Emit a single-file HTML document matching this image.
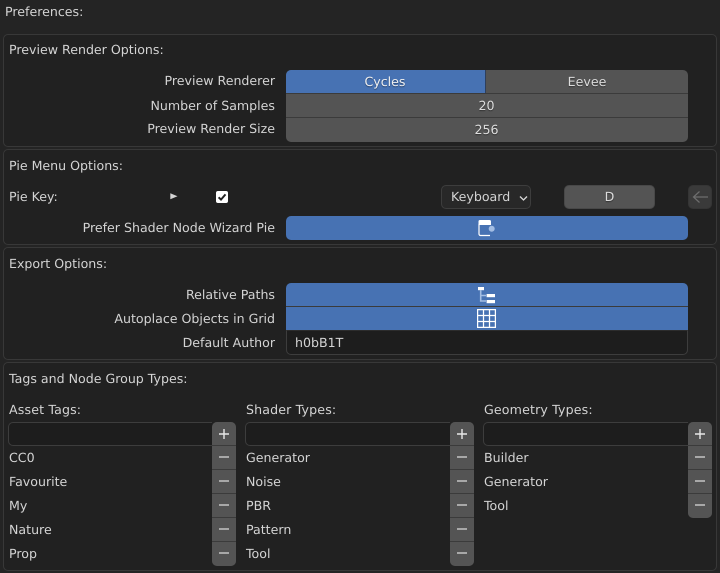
<!DOCTYPE html>
<html><head><meta charset="utf-8"><style>
html,body{margin:0;padding:0;background:#242424}
#r{position:relative;width:720px;height:573px;overflow:hidden;background:#242424;font-family:"DejaVu Sans",sans-serif;font-size:12.6px;color:#d4d4d4;text-rendering:geometricPrecision}
.t{position:absolute;white-space:nowrap;line-height:16px;height:16px}
.h{letter-spacing:.15px}
.tr{position:absolute;white-space:nowrap;line-height:16px;height:16px;right:445px;text-align:right}
.c{position:absolute;white-space:nowrap;line-height:16px;height:16px;text-align:center;color:#dcdcdc;text-shadow:0 1px 1px #0006}
.p{position:absolute;left:3px;width:712px;border:1px solid #383838;border-radius:5px;background:#212121}
.b{position:absolute;box-sizing:border-box}
.g{background:#545454}.bl{background:#4772b3}
.sm{position:absolute;width:24px;height:23px;background:#545454;left:0}
.ln{position:absolute;background:#3b3b3b}
</style></head><body><div id="r">
<div class="t" style="left:5px;top:4px">Preferences:</div>

<div class="p" style="top:34px;height:111px"></div>
<div class="t" style="left:9px;top:42px">Preview Render Options:</div>
<div class="tr" style="top:73px">Preview Renderer</div>
<div class="tr" style="top:98px">Number of Samples</div>
<div class="tr" style="top:121px">Preview Render Size</div>
<div class="b g" style="left:286px;top:70px;width:402px;height:72px;border-radius:5px;overflow:hidden">
<div class="b bl" style="left:0;top:0;width:199px;height:23px"></div>
<div class="b" style="left:199px;top:0;width:1px;height:23px;background:#2e3f5c"></div>
<div class="ln" style="left:0;top:23px;width:402px;height:1px"></div>
<div class="ln" style="left:0;top:47px;width:402px;height:1px"></div>
</div>
<div class="c" style="left:285px;width:200px;top:74px;color:#f0f0f0">Cycles</div>
<div class="c" style="left:486px;width:202px;top:74px">Eevee</div>
<div class="c" style="left:285px;width:403px;top:98px">20</div>
<div class="c" style="left:285px;width:403px;top:122px">256</div>

<div class="p" style="top:149px;height:94px"></div>
<div class="t" style="left:9px;top:158px">Pie Menu Options:</div>
<div class="t" style="left:9px;top:189px">Pie Key:</div>
<svg style="position:absolute;left:170px;top:192px" width="9" height="9"><path d="M0.3 1.3L7.5 4.3L0.3 7.3Z" fill="#d4d4d4"/></svg>
<svg style="position:absolute;left:216px;top:191px" width="12" height="12"><rect width="12" height="12" rx="2" fill="#fff"/><path d="M2.6 6.3L5 8.6L9.5 3.4" fill="none" stroke="#222" stroke-width="2"/></svg>
<div class="b" style="left:441px;top:185px;width:90px;height:24px;border:1px solid #3d3d3d;border-radius:5px;background:#282828"></div>
<div class="t" style="left:451px;top:189px">Keyboard</div>
<svg style="position:absolute;left:519px;top:195px" width="9" height="7"><path d="M1 1.5L4.5 5L8 1.5" fill="none" stroke="#d8d8d8" stroke-width="1.3"/></svg>
<div class="b g" style="left:564px;top:185px;width:91px;height:24px;border-radius:5px;border:1px solid #484848"></div>
<div class="c" style="left:564px;width:91px;top:189px">D</div>
<div class="b" style="left:688px;top:185px;width:24px;height:24px;border-radius:5px;background:#3a3a3a;border:1px solid #353535"></div>
<svg style="position:absolute;left:692px;top:190px" width="17" height="14"><path d="M16 7H1.5M7.5 1.5L1.5 7L7.5 12.5" fill="none" stroke="#6e6e6e" stroke-width="1.2"/></svg>
<div class="tr" style="top:220px">Prefer Shader Node Wizard Pie</div>
<div class="b bl" style="left:286px;top:216px;width:402px;height:24px;border-radius:5px"></div>
<svg style="position:absolute;left:477px;top:219px" width="19" height="18"><path d="M2 5V15A1.5 1.5 0 0 0 3.5 16.5H13" fill="none" stroke="#fff" stroke-width="1.2"/><path d="M1.5 6V2.5A1.5 1.5 0 0 1 3 1H12.5A1.5 1.5 0 0 1 14 2.5V6Z" fill="#fff"/><circle cx="14.7" cy="9.7" r="3" fill="#a3bde3"/></svg>

<div class="p" style="top:247px;height:111px"></div>
<div class="t" style="left:9px;top:256px">Export Options:</div>
<div class="tr" style="top:287px">Relative Paths</div>
<div class="tr" style="top:311px">Autoplace Objects in Grid</div>
<div class="tr" style="top:335px">Default Author</div>
<div class="b bl" style="left:286px;top:283px;width:402px;height:47px;border-radius:5px 5px 0 0"></div>
<div class="ln" style="left:286px;top:306px;width:402px;height:1px"></div>
<div class="b" style="left:286px;top:330px;width:402px;height:25px;background:#1d1d1d;border:1px solid #3d3d3d;border-top:1px solid #2c2c2c;border-radius:0 0 5px 5px"></div>
<div class="t" style="left:295px;top:335px">h0bB1T</div>
<svg style="position:absolute;left:477px;top:286px" width="20" height="19"><rect x="1" y="1" width="6" height="3.2" fill="#fff"/><path d="M3.7 4V15H9M3.7 9.5H9" fill="none" stroke="#a3bde3" stroke-width="1.6"/><rect x="9.6" y="8" width="8.4" height="3.2" fill="#fff"/><rect x="9.6" y="14" width="8.4" height="3.2" fill="#fff"/></svg>
<svg style="position:absolute;left:477px;top:309px" width="20" height="20"><path d="M.6.6H18.4V18.4H.6ZM6.5.6V18.4M12.5.6V18.4M.6 6.5H18.4M.6 12.5H18.4" fill="none" stroke="#fff" stroke-width="1.25"/></svg>

<div class="p" style="top:362px;height:207px"></div>
<div class="t" style="left:9px;top:371px">Tags and Node Group Types:</div>
<div class="t h" style="left:9px;top:402px">Asset Tags:</div>
<div class="t h" style="left:246px;top:402px">Shader Types:</div>
<div class="t h" style="left:484px;top:402px">Geometry Types:</div>

<div class="b" style="left:8px;top:422px;width:204px;height:24px;background:#1d1d1d;border:1px solid #3d3d3d;border-right:0;border-radius:5px 0 0 5px"></div>
<div class="b" style="left:245px;top:422px;width:205px;height:24px;background:#1d1d1d;border:1px solid #3d3d3d;border-right:0;border-radius:5px 0 0 5px"></div>
<div class="b" style="left:483px;top:422px;width:205px;height:24px;background:#1d1d1d;border:1px solid #3d3d3d;border-right:0;border-radius:5px 0 0 5px"></div>

<div class="b" style="left:212px;top:422px;width:24px;height:144px;background:#3b3b3b;border-radius:5px;overflow:hidden">
<div class="sm" style="top:0"></div><div class="sm" style="top:24px"></div><div class="sm" style="top:48px"></div><div class="sm" style="top:72px"></div><div class="sm" style="top:96px"></div><div class="sm" style="top:120px;height:24px"></div></div>
<div class="b" style="left:450px;top:422px;width:24px;height:144px;background:#3b3b3b;border-radius:5px;overflow:hidden">
<div class="sm" style="top:0"></div><div class="sm" style="top:24px"></div><div class="sm" style="top:48px"></div><div class="sm" style="top:72px"></div><div class="sm" style="top:96px"></div><div class="sm" style="top:120px;height:24px"></div></div>
<div class="b" style="left:688px;top:422px;width:24px;height:96px;background:#3b3b3b;border-radius:5px;overflow:hidden">
<div class="sm" style="top:0"></div><div class="sm" style="top:24px"></div><div class="sm" style="top:48px"></div><div class="sm" style="top:72px;height:24px"></div></div>
<svg style="position:absolute;left:0;top:0" width="720" height="573" fill="none" stroke-width="1.4">
<path stroke="#e8e8e8" d="M219 434H229M224 429V439M457 434H467M462 429V439M695 434H705M700 429V439"/>
<path stroke="#c4c4c4" d="M219 457H229M219 481H229M219 505H229M219 529H229M219 553H229M457 457H467M457 481H467M457 505H467M457 529H467M457 553H467M695 457H705M695 481H705M695 505H705"/>
</svg>

<div class="t" style="left:9px;top:450px">CC0</div>
<div class="t" style="left:9px;top:474px">Favourite</div>
<div class="t" style="left:9px;top:498px">My</div>
<div class="t" style="left:9px;top:522px">Nature</div>
<div class="t" style="left:9px;top:546px">Prop</div>
<div class="t" style="left:246px;top:450px">Generator</div>
<div class="t" style="left:246px;top:474px">Noise</div>
<div class="t" style="left:246px;top:498px">PBR</div>
<div class="t" style="left:246px;top:522px">Pattern</div>
<div class="t" style="left:246px;top:546px">Tool</div>
<div class="t" style="left:484px;top:450px">Builder</div>
<div class="t" style="left:484px;top:474px">Generator</div>
<div class="t" style="left:484px;top:498px">Tool</div>
</div></body></html>
